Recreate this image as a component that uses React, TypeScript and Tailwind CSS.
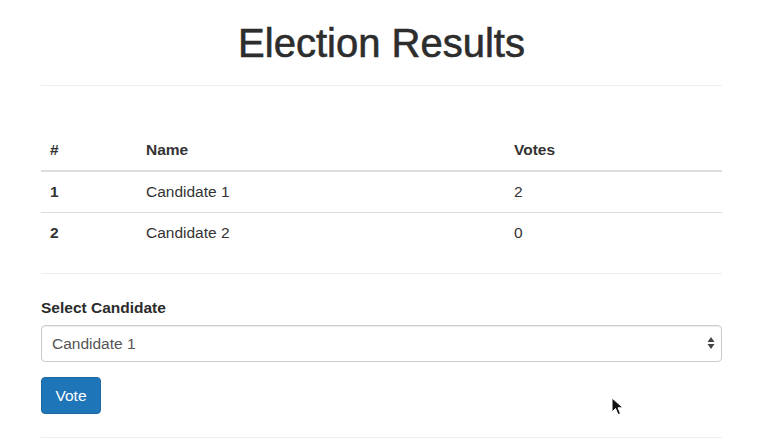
import React from 'react';

const candidates = [
  { id: 1, name: 'Candidate 1', votes: 2 },
  { id: 2, name: 'Candidate 2', votes: 0 },
];

export default function App() {
  return (
    <div
      className="relative min-h-[439px] bg-white text-[#333] text-[15.5px] leading-[22px]"
      style={{ fontFamily: '"Liberation Sans", Arial, sans-serif' }}
    >
      <div className="px-[41px]">
        <h1 className="pt-[21px] text-center text-[40px] leading-[44px] font-normal text-[#2d2d2d] [-webkit-text-stroke:0.6px_#2d2d2d]">
          Election Results
        </h1>
        <hr className="mt-[20px] border-0 border-t border-[#eee]" />

        {/* Results table */}
        <table className="mt-[44px] w-full border-collapse text-left">
          <thead>
            <tr>
              <th className="w-[96px] px-[9px] py-[9px] font-bold border-b-2 border-[#ddd]">#</th>
              <th className="w-[368px] px-[9px] py-[9px] font-bold border-b-2 border-[#ddd]">Name</th>
              <th className="px-[9px] py-[9px] font-bold border-b-2 border-[#ddd]">Votes</th>
            </tr>
          </thead>
          <tbody>
            {candidates.map((c) => (
              <tr key={c.id}>
                <th className="px-[9px] py-[9px] font-bold border-t border-[#ddd]">{c.id}</th>
                <td className="px-[9px] py-[9px] border-t border-[#ddd]">{c.name}</td>
                <td className="px-[9px] py-[9px] border-t border-[#ddd]">{c.votes}</td>
              </tr>
            ))}
          </tbody>
        </table>

        <hr className="mt-[20px] border-0 border-t border-[#eee]" />

        {/* Vote form */}
        <form className="pt-[23px]" onSubmit={(e) => e.preventDefault()}>
          <label className="block font-bold text-[#2b2b2b] mb-[6px]">Select Candidate</label>
          <div className="relative">
            <select className="block w-full h-[37px] appearance-none rounded-[4px] border border-[#ccc] bg-white px-[10px] text-[15.5px] text-[#555] shadow-[inset_0_1px_1px_rgba(0,0,0,0.075)] outline-none">
              {candidates.map((c) => (
                <option key={c.id} value={c.id}>{c.name}</option>
              ))}
            </select>
            <svg
              className="pointer-events-none absolute right-[7px] top-[11px]"
              width="8"
              height="14"
              viewBox="0 0 8 14"
            >
              <path d="M4 1 L7.5 6 L0.5 6 Z" fill="#444" />
              <path d="M4 13 L7.5 8 L0.5 8 Z" fill="#444" />
            </svg>
          </div>
          <button
            type="submit"
            className="mt-[15px] h-[37px] w-[60px] rounded-[4px] border border-[#1d6aa6] bg-[#1e75b8] text-[15.5px] text-white"
          >
            Vote
          </button>
        </form>

        <hr className="mt-[23px] border-0 border-t border-[#eee]" />
      </div>

      {/* mouse pointer */}
      <svg
        className="absolute left-[611px] top-[397px]"
        width="14"
        height="20"
        viewBox="0 0 14 20"
      >
        <path
          d="M1 1 L1 15 L4.5 11.5 L7 17.5 L9.5 16.5 L7 10.8 L12 10.8 Z"
          fill="#111"
          stroke="#fff"
          strokeWidth="1"
        />
      </svg>
    </div>
  );
}
